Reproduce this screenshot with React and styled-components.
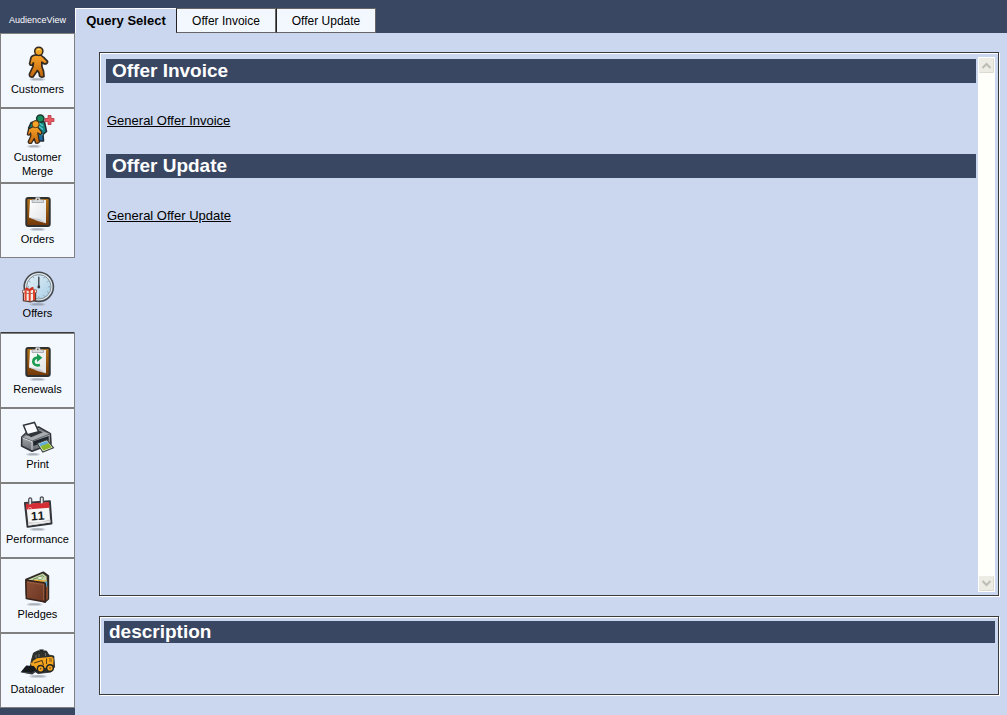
import React from "react";
import styled, { createGlobalStyle, css } from "styled-components";

const navy = "#3a4763";
const pale = "#cbd7ee";
const white = "#f3f8ff";
const line = "#3a3a3a";

const GlobalStyle = createGlobalStyle`
  * { box-sizing: border-box; }
  body {
    margin: 0;
    background: ${pale};
    color: #000;
    font-family: "Liberation Sans", Arial, sans-serif;
  }
`;

const Page = styled.div`
  display: flex;
  min-height: 100vh;
`;

const Sidebar = styled.nav`
  flex: none;
  width: 75px;
  background: ${navy};
`;

const Brand = styled.div`
  height: 33px;
  padding-top: 6px;
  color: #fff;
  font-size: 9px;
  line-height: 28px;
  text-align: center;
  white-space: nowrap;
`;

const NavItem = styled.button`
  display: flex;
  flex-direction: column;
  align-items: center;
  justify-content: center;
  gap: 1px;
  width: 100%;
  height: 75px;
  padding: 1px 4px 0;
  border: 1px solid #808080;
  background: ${white};
  color: #000;
  font: 11px/14px "Liberation Sans", Arial, sans-serif;
  cursor: pointer;
  ${(p) =>
    p.$active &&
    css`
      gap: 0;
      padding-top: 0;
      background: ${pale};
      border-color: ${pale} ${pale} ${line};
    `}
`;

const Icon = styled.svg`
  display: block;
  flex: none;
  width: 35px;
  height: 35px;
  overflow: visible;
`;

const Content = styled.div`
  display: flex;
  flex: 1;
  flex-direction: column;
  min-width: 0;
`;

const TabBar = styled.div`
  display: flex;
  align-items: flex-end;
  height: 33px;
  padding-top: 8px;
  background: ${navy};
`;

const Tab = styled.button`
  width: 100px;
  height: 25px;
  padding: 0;
  border: 1px solid #666;
  border-left-color: #222;
  background: ${white};
  color: #000;
  font: 12px/22px "Liberation Sans", Arial, sans-serif;
  cursor: pointer;
  ${(p) =>
    p.$active &&
    css`
      width: 101px;
      border: 0;
      border-top: 1px solid #fff;
      border-left: 1px solid #fff;
      background: ${pale};
      font-weight: bold;
      font-size: 13px;
    `}
`;

const Main = styled.main`
  display: flex;
  flex: 1;
  flex-direction: column;
  gap: 20px;
  padding: 19px 8px 20px 24px;
`;

const Panel = styled.section`
  border: 1px solid ${line};
  box-shadow: 1px 1px 0 #fff, inset 1px 1px 0 #fff;
`;

const QueryPanel = styled(Panel)`
  display: flex;
  flex: 1;
  gap: 2px;
  padding: 4px 3px 3px 6px;
`;

const DescriptionPanel = styled(Panel)`
  height: 79px;
  padding: 4px 3px 4px 4px;
`;

const QueryList = styled.div`
  flex: 1;
  padding-top: 2px;
`;

const QueryGroup = styled.div`
  height: 95px;
`;

const Heading = styled.h2`
  height: ${(p) => (p.$compact ? 22 : 24)}px;
  margin: 0;
  padding-left: ${(p) => (p.$compact ? 5 : 6)}px;
  background: ${navy};
  color: #fff;
  font-size: 19px;
  line-height: ${(p) => (p.$compact ? 22 : 24)}px;
`;

const QueryLink = styled.a`
  display: inline-block;
  margin: 30px 0 0 1px;
  color: #000;
  font-size: 13px;
  line-height: 16px;
`;

const ScrollTrack = styled.div`
  display: flex;
  flex-direction: column;
  justify-content: space-between;
  width: 17px;
  background: #fefefb;
`;

const ScrollButton = styled.button`
  display: flex;
  align-items: center;
  justify-content: center;
  height: 17px;
  margin: 0;
  padding: 0;
  border: 1px solid #fff;
  border-radius: 2px;
  background: #ecebe4;
  box-shadow: inset -1px -1px 0 #dcdace;
`;

function Shadow({ cx = 17.5, cy = 33.5, rx = 8 }) {
  return (
    <g fill="#7d8590">
      <ellipse cx={cx} cy={cy} rx={rx} ry="1.6" opacity=".3" />
      <ellipse cx={cx} cy={cy - 0.3} rx={rx - 2.5} ry="0.9" opacity=".45" />
    </g>
  );
}

function CustomerIcon() {
  return (
    <Icon viewBox="0 0 35 35" aria-hidden="true">
      <defs>
        <linearGradient id="person" x1="0" y1="0" x2="0" y2="1">
          <stop offset="0" stopColor="#f9a42a" />
          <stop offset="1" stopColor="#c0640c" />
        </linearGradient>
      </defs>
      <Shadow />
      <path d="M15.5 9 Q12 9.4 11 11.5 L9.6 17.8 Q10.2 20 12.4 18.8 L13.4 17 L13 20.5 L9.4 28 Q9.2 31.6 13 31 L17.4 24.6 L19 26.8 L19.6 30.2 Q21.5 31.8 24 30.4 L23.5 25 L22 21 L21.8 16.2 L24.5 18 Q27.8 17.8 27.6 15.4 L23.4 11.2 Q21.6 9 19.5 9 Z" fill="url(#person)" stroke="#33291f" strokeWidth="1.7" strokeLinejoin="round" />
      <circle cx="18.8" cy="5.3" r="4.1" fill="#f0a423" stroke="#33291f" strokeWidth="1.5" />
      <path d="M16.8 4.4 Q18.5 2.6 20.5 4" stroke="#ffd66b" strokeWidth="1.2" fill="none" />
    </Icon>
  );
}

function MergeIcon() {
  return (
    <Icon viewBox="0 0 35 35" aria-hidden="true">
      <defs>
        <linearGradient id="backPerson" x1="0" y1="0" x2="0" y2="1">
          <stop offset="0" stopColor="#168a62" />
          <stop offset=".5" stopColor="#16878a" />
          <stop offset="1" stopColor="#1f5eae" />
        </linearGradient>
      </defs>
      <Shadow cx={14} cy={32.5} rx={7} />
      <path d="M17 6.5 L11 8.8 L8.6 14 L16 27 L23.5 27 L23 20.5 L26.5 17.5 L24.5 8 Z" fill="url(#backPerson)" stroke="#222e35" strokeWidth="1.6" strokeLinejoin="round" />
      <circle cx="20.3" cy="4.6" r="3.7" fill="#168d5c" stroke="#1d3a31" strokeWidth="1.5" />
      <path d="M19 9 L23 12 M19 12.5 L23.2 15.5 M19.5 19 L22.5 21" stroke="#54c6d7" strokeWidth="1.4" />
      <path d="M12.8 12.7 L8.6 15 L7.4 20.5 Q8.2 21.9 9.9 20.5 L10.6 19 L10.8 22 L8.2 27.8 Q8.5 30 11.5 29.2 L14.2 24.5 L15.6 29 Q18 30 19.4 28 L17.8 19 L20.5 20.5 Q22.5 19.7 21.5 17.6 L17.5 12.8 Z" fill="url(#person)" stroke="#362a1e" strokeWidth="1.3" strokeLinejoin="round" />
      <circle cx="15.6" cy="10.2" r="3.5" fill="#f6a326" stroke="#5a3c1c" strokeWidth="1" />
      <path d="M28 1.5 H31 V4.5 H34 V7.5 H31 V10.5 H28 V7.5 H25 V4.5 H28 Z" fill="#e65a63" stroke="#b7323c" strokeWidth=".8" />
    </Icon>
  );
}

function ClipboardIcon({ renewal }) {
  return (
    <Icon viewBox="0 0 35 35" aria-hidden="true">
      <defs>
        <linearGradient id="board" x1="0" y1="0" x2="0" y2="1">
          <stop offset="0" stopColor="#b67518" />
          <stop offset="1" stopColor="#713608" />
        </linearGradient>
        <linearGradient id="paper" x1="0" y1="0" x2="1" y2="1">
          <stop offset="0" stopColor="#fff" />
          <stop offset="1" stopColor="#dfe1e4" />
        </linearGradient>
      </defs>
      <Shadow />
      <rect x="6.3" y="1.9" width="23.4" height="28.2" rx="2" fill="url(#board)" stroke="#30302e" strokeWidth="2" />
      <path d="M10 4 H26 V27.3 L20 25 L9 21.5 Z" fill="url(#paper)" />
      <path d="M9 21.3 L20 23 L26 27.3 L17.5 25 Z" fill="#c9cbd0" />
      <path d="M12 6.5 V3.7 H15 L16 1.2 H19.5 L20.5 3.7 H23.5 V6.5 Z" fill="#d8dbdf" stroke="#858990" strokeWidth=".6" />
      <circle cx="17.8" cy="3.4" r=".8" fill="#684520" />
      {renewal && (
        <g>
          <path d="M20 19 C11 21.5 11.8 10.5 18 11.8" fill="none" stroke="#1a9c50" strokeWidth="2.6" />
          <path d="M17 7.6 L22.3 11.8 L17 16 Z" fill="#1a9c50" />
        </g>
      )}
    </Icon>
  );
}

function OffersIcon() {
  return (
    <Icon viewBox="0 0 35 35" aria-hidden="true">
      <defs>
        <linearGradient id="face" x1="0" y1="0" x2="1" y2="1">
          <stop offset="0" stopColor="#e4f1f8" />
          <stop offset="1" stopColor="#a9cfe5" />
        </linearGradient>
      </defs>
      <Shadow />
      <circle cx="18.8" cy="15.8" r="14.6" fill="#e6eaec" stroke="#43494e" strokeWidth="1.6" />
      <circle cx="18.8" cy="15.8" r="12.2" fill="url(#face)" stroke="#82929d" strokeWidth="1" />
      <path d="M18.8 4.5 V6 M30 15.8 H28.5 M18.8 27 V25.5 M7.6 15.8 H9 M24.4 6.1 L23.7 7.3 M28.5 10.2 L27.2 11 M28.5 21.4 L27.2 20.6 M24.4 25.5 L23.7 24.3 M13.2 6.1 L13.9 7.3 M9.1 10.2 L10.4 11" stroke="#70899a" strokeWidth=".8" />
      <path d="M18.8 6 V16" stroke="#343a40" strokeWidth="1.3" />
      <circle cx="18.8" cy="16" r="1.4" fill="#30363b" />
      <path d="M3.4 21.5 L15.6 21 V29 L10.5 30.9 L3.4 29.7 Z" fill="#f3ece8" stroke="#5e3a35" strokeWidth="1.2" />
      <path d="M2.5 19.3 L12 18.2 L16.5 19 V21.5 L10.5 22.7 L2.5 21.8 Z" fill="#f8f0e9" stroke="#80504a" strokeWidth=".8" />
      <path d="M5.6 19.3 V29.5 M9.7 19 V30 M14 19 V29" stroke="#e34428" strokeWidth="2" />
      <path d="M9.5 19 C5 14.5 4.2 20 9.5 19 C14.8 19 13.5 13.8 9.5 19" fill="#f08274" stroke="#d23424" strokeWidth="1.4" />
    </Icon>
  );
}

function PrintIcon() {
  return (
    <Icon viewBox="0 0 35 35" aria-hidden="true">
      <defs>
        <linearGradient id="printer" x1="0" y1="0" x2="0" y2="1">
          <stop offset="0" stopColor="#d0d3d7" />
          <stop offset="1" stopColor="#63686e" />
        </linearGradient>
      </defs>
      <Shadow cx={13} rx={7} />
      <path d="M7 11 L18.5 6 L30.4 12.7 L31 23 L12 30.2 L1.6 25 L1.8 16 Z" fill="url(#printer)" stroke="#303338" strokeWidth="1.6" strokeLinejoin="round" />
      <path d="M1.8 16 L12.2 20 L30.5 12.8 L18.5 8 Z" fill="#a7acb1" stroke="#494d52" strokeWidth=".8" />
      <path d="M7 13.5 L19 9.4 L23 11.3 L11 16.2 Z" fill="#30353b" />
      <path d="M3.5 4.2 L14.5 1.5 L18.6 10.8 L7.4 13.8 Z" fill="#fafcff" stroke="#33373c" strokeWidth="1.5" />
      <path d="M13 20.5 L28.7 15 V19.5 L13.5 25 Z" fill="#20262e" />
      <path d="M2.5 17 L12 20.7 V29" fill="none" stroke="#d9dcdf" strokeWidth=".9" />
      <path d="M17.3 22.5 L27 18.8 L33.5 26.8 L22.8 31 Z" fill="#f5f9ef" stroke="#39423a" strokeWidth="1.1" />
      <path d="M18.8 23 L26.6 20 L28.5 22.4 L20.5 25.5 Z" fill="#61aadd" />
      <path d="M20.5 25.3 L28.4 22.3 L31.8 26.3 L23.3 29.5 Z" fill="#8db72a" />
    </Icon>
  );
}

const CalendarNumber = styled.text`
  font: bold 12px "Liberation Sans", Arial, sans-serif;
  font-kerning: none;
  fill: #17191c;
`;

function CalendarIcon() {
  return (
    <Icon viewBox="0 0 35 35" aria-hidden="true">
      <Shadow />
      <path d="M5 7 L29.8 5.2 L31.4 27.4 L7.6 30.8 Z" fill="#f5f5f5" stroke="#33353a" strokeWidth="2.1" strokeLinejoin="round" />
      <path d="M5.8 7.7 L29 6 L29.6 11.8 L6.3 13.5 Z" fill="#d42d34" />
      <path d="M8 26 Q19 27.5 30.3 23.2 L30.6 26.6 L8.3 29.8 Z" fill="#c9cace" />
      <path d="M9 28.5 L29.5 25.6" stroke="#fff" strokeWidth=".8" />
      <path d="M8.7 8.5 V3 Q10.2 .8 11.7 3 V8 M20.3 7.6 V1.9 Q21.8 -.2 23.3 1.9 V7" fill="#e9eaed" stroke="#484b51" strokeWidth="1.2" />
      <path d="M8 12.5 L10 11.4 L12 12.5" stroke="#ef9b9a" strokeWidth="1" fill="none" />
      <CalendarNumber x="11" y="24" transform="rotate(-4 18 20)">11</CalendarNumber>
    </Icon>
  );
}

function WalletIcon() {
  return (
    <Icon viewBox="0 0 35 35" aria-hidden="true">
      <defs>
        <linearGradient id="leather" x1="0" y1="0" x2="1" y2="1">
          <stop offset="0" stopColor="#8d5036" />
          <stop offset="1" stopColor="#6a3522" />
        </linearGradient>
      </defs>
      <Shadow cx={14.5} />
      <path d="M6 8.5 L23.3 1.2 L28.4 5 V28 L25 31 L6.5 24 Z" fill="#3f3329" stroke="#302c28" strokeWidth="1.6" strokeLinejoin="round" />
      <path d="M8 8.8 L22.8 2.4 L26.6 5.4 L26.8 11 Z" fill="#c5d5ac" />
      <path d="M13 8.5 L22.5 4.5 L24 6.3" fill="none" stroke="#6b8c57" strokeWidth="1" />
      <ellipse cx="20" cy="7" rx="2.5" ry="1.6" fill="#e9efd2" stroke="#799963" strokeWidth=".7" />
      <path d="M14 8.8 L27 9.5 V11.4 L13 10.5 Z" fill="#efa928" />
      <path d="M21.5 11 L27.2 10.2 V17 L24 17 Z" fill="#53a7d5" />
      <path d="M25.5 16.5 L28 15 V27.7 L25.5 30.2 Z" fill="#894c2f" />
      <path d="M5.9 9.2 L24 11.8 Q25.4 12 25.4 13.5 V31 L6.3 27.5 Z" fill="url(#leather)" stroke="#35231b" strokeWidth="1.5" strokeLinejoin="round" />
      <path d="M7.3 11 L23.5 13.5 V29" fill="none" stroke="#a86b4d" strokeWidth=".6" />
    </Icon>
  );
}

function LoaderIcon() {
  return (
    <Icon viewBox="0 0 35 35" aria-hidden="true">
      <Shadow cx={18} cy={30.5} rx={9} />
      <path d="M13.5 7 L18 4.8 L26.5 5 L28.8 9 L33.8 10 L34.6 21 L31 26 L18 27.5 L10 22 L11.5 14 Z" fill="#2e302d" stroke="#202221" strokeWidth=".8" />
      <path d="M19.5 5 V3.8 H23.5 V5 M16 9 V12 M19 8 V11 M25.5 7 V10" stroke="#68706b" strokeWidth="1" />
      <path d="M12.8 15 L17 12.3 L31.7 10.8 L33.6 12.5 L33.2 20 L28 20.5 L25 22 L17 24.5 L10.7 22.4 Z" fill="#f6a51d" />
      <path d="M14 17 L22 14.5 L23.5 19 M26.5 12.5 V18" stroke="#5a421b" strokeWidth="1.1" fill="none" />
      <path d="M29 13 H32 M29 15 H32" stroke="#44351d" strokeWidth=".7" />
      <circle cx="20.7" cy="22.8" r="4" fill="#262725" />
      <circle cx="20.7" cy="22.8" r="2.6" fill="#f5a31d" />
      <circle cx="20.7" cy="22.8" r=".8" fill="#5c4217" />
      <circle cx="30" cy="22" r="4" fill="#262725" />
      <circle cx="30" cy="22" r="2.6" fill="#f5a31d" />
      <circle cx="30" cy="22" r=".8" fill="#5c4217" />
      <path d="M11 17 L15.8 23" stroke="#efa120" strokeWidth="2" />
      <path d="M.6 26.3 L6.2 19.4 L13.8 20 L17.4 24.5 L12.2 28.6 Z" fill="#171a1d" />
      <path d="M2 26.3 L12 27.3 L15.6 24.7" stroke="#54585b" strokeWidth=".8" fill="none" />
    </Icon>
  );
}

const navItems = [
  { label: "Customers", icon: <CustomerIcon /> },
  { label: "Customer Merge", icon: <MergeIcon /> },
  { label: "Orders", icon: <ClipboardIcon /> },
  { label: "Offers", icon: <OffersIcon />, active: true },
  { label: "Renewals", icon: <ClipboardIcon renewal /> },
  { label: "Print", icon: <PrintIcon /> },
  { label: "Performance", icon: <CalendarIcon /> },
  { label: "Pledges", icon: <WalletIcon /> },
  { label: "Dataloader", icon: <LoaderIcon /> },
];

const queries = [
  { title: "Offer Invoice", link: "General Offer Invoice" },
  { title: "Offer Update", link: "General Offer Update" },
];

function Chevron({ down }) {
  return (
    <svg width="11" height="7" viewBox="0 0 11 7" aria-hidden="true">
      <path d={down ? "M1.5 1 L5.5 5 L9.5 1" : "M1.5 6 L5.5 2 L9.5 6"} fill="none" stroke="#bdbcb5" strokeWidth="2" />
    </svg>
  );
}

export default function App() {
  return (
    <>
      <GlobalStyle />
      <Page>
        <Sidebar>
          <Brand>AudienceView</Brand>
          {navItems.map(({ label, icon, active }) => (
            <NavItem key={label} type="button" $active={active}>
              {icon}
              <span>{label}</span>
            </NavItem>
          ))}
        </Sidebar>
        <Content>
          <TabBar role="tablist">
            <Tab type="button" role="tab" aria-selected="true" $active>Query Select</Tab>
            <Tab type="button" role="tab" aria-selected="false">Offer Invoice</Tab>
            <Tab type="button" role="tab" aria-selected="false">Offer Update</Tab>
          </TabBar>
          <Main>
            <QueryPanel>
              <QueryList>
                {queries.map(({ title, link }) => (
                  <QueryGroup key={title}>
                    <Heading>{title}</Heading>
                    <QueryLink href="#">{link}</QueryLink>
                  </QueryGroup>
                ))}
              </QueryList>
              <ScrollTrack>
                <ScrollButton type="button" disabled aria-label="Scroll up"><Chevron /></ScrollButton>
                <ScrollButton type="button" disabled aria-label="Scroll down"><Chevron down /></ScrollButton>
              </ScrollTrack>
            </QueryPanel>
            <DescriptionPanel>
              <Heading $compact>description</Heading>
            </DescriptionPanel>
          </Main>
        </Content>
      </Page>
    </>
  );
}
